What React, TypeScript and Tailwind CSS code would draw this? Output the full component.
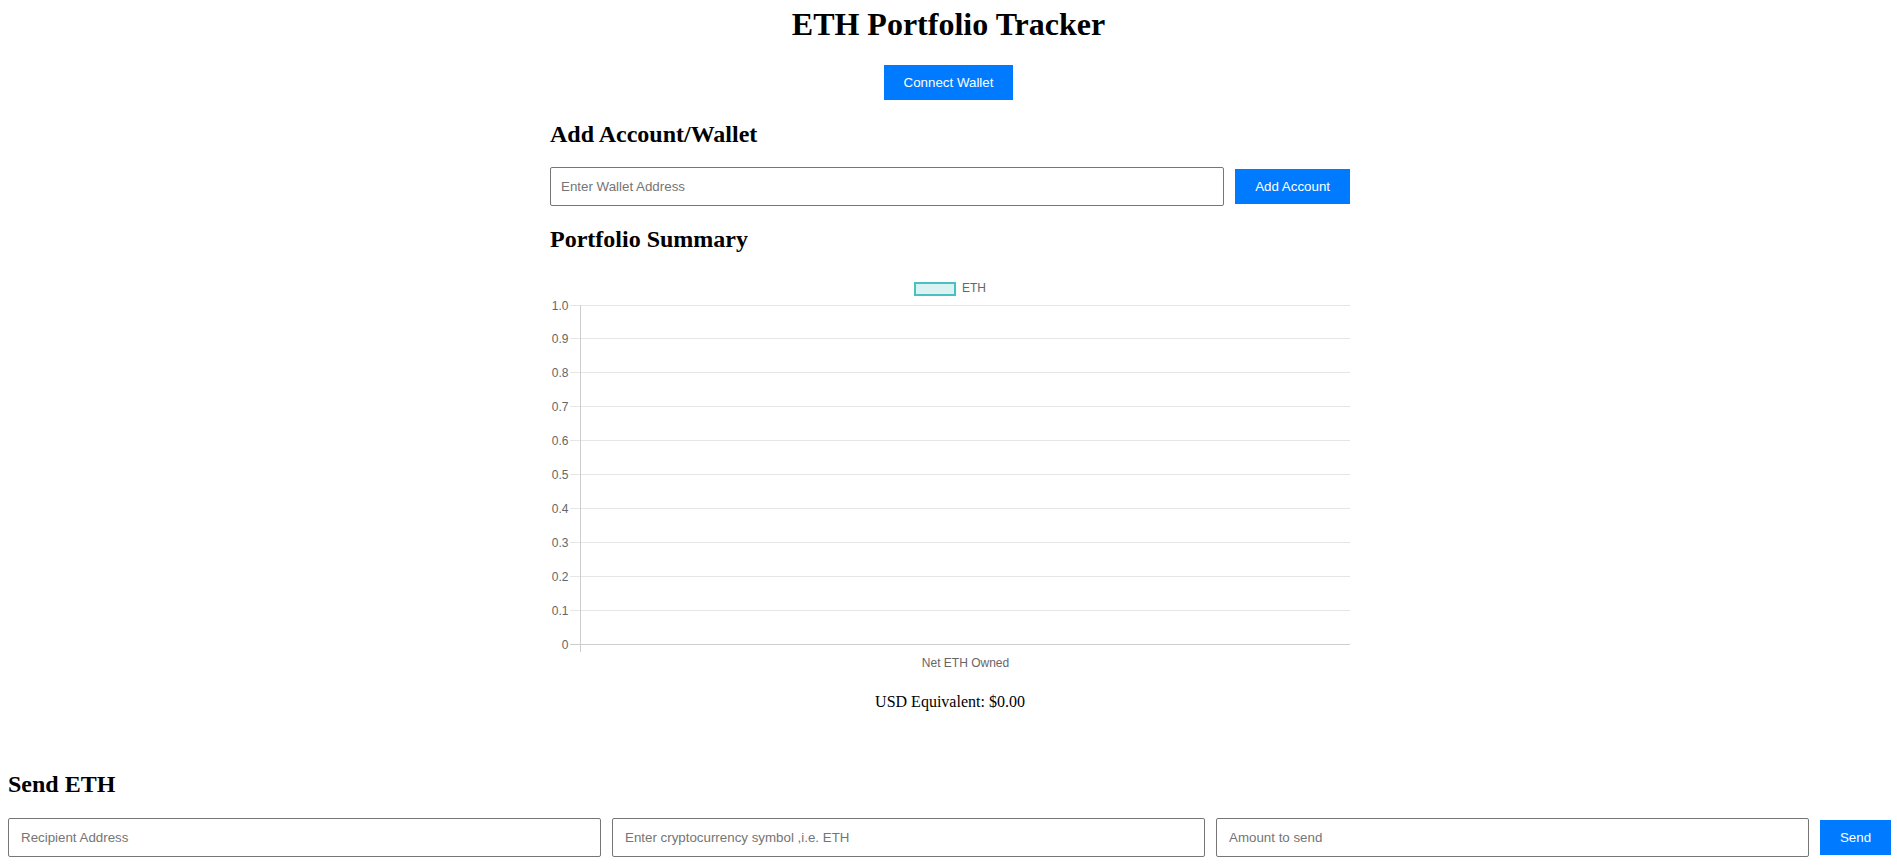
import React from "react"

const ticks = ["1.0", "0.9", "0.8", "0.7", "0.6", "0.5", "0.4", "0.3", "0.2", "0.1", "0"]

function PortfolioChart() {
  return (
    <svg width="800" height="400" className="block" fontFamily="'Liberation Sans', Arial, sans-serif" fontSize="12">
      {/* legend */}
      <rect x="365" y="11" width="40" height="12" fill="rgba(75,192,192,0.2)" stroke="rgb(75,192,192)" strokeWidth="2" />
      <text x="412" y="20.3" fill="#666">ETH</text>

      {ticks.map((t, i) => {
        const y = (i === 0 ? 33 : 32 + 34 * i) + 0.5
        return (
          <g key={t}>
            <line x1="20" x2="800" y1={y} y2={y} stroke={i === 10 ? "#cdcdcd" : "#e6e6e6"} />
            <text x="18.5" y={y + 4} textAnchor="end" fill="#666">
              {t}
            </text>
          </g>
        )
      })}
      <line x1="30.5" x2="30.5" y1="33" y2="380" stroke="#cdcdcd" />

      <text x="415.5" y="394.5" textAnchor="middle" fill="#666">
        Net ETH Owned
      </text>
    </svg>
  )
}

export default function App() {
  return (
    <div className="min-h-screen bg-white pt-[6px] text-black font-['Liberation_Serif','Times_New_Roman',serif]">
      <h1 className="text-center text-[32px] font-bold leading-[36px]">ETH Portfolio Tracker</h1>

      <div className="mt-[23px] flex justify-center">
        <button className="h-[35px] bg-[#007bff] px-[20px] text-[13.33px] text-white font-['Liberation_Sans',Arial,sans-serif]">
          Connect Wallet
        </button>
      </div>

      <div className="mx-auto w-[803px] pl-[3px]">
        {/* Add account */}
        <h2 className="mt-[20px] text-[24px] font-bold leading-[28px]">Add Account/Wallet</h2>
        <div className="mt-[19px] flex items-center gap-[11px]">
          <input
            placeholder="Enter Wallet Address"
            className="h-[39px] flex-1 rounded-[2px] border border-[#767676] px-[10px] text-[13.33px] outline-none placeholder:text-[#757575] font-['Liberation_Sans',Arial,sans-serif]"
          />
          <button className="h-[35px] bg-[#007bff] px-[20px] text-[13.33px] text-white font-['Liberation_Sans',Arial,sans-serif]">
            Add Account
          </button>
        </div>

        {/* Summary */}
        <h2 className="mt-[19px] text-[24px] font-bold leading-[28px]">Portfolio Summary</h2>
        <div className="mt-[19px]">
          <PortfolioChart />
        </div>
        <p className="mt-[21px] text-center text-[16px] leading-[18px]">USD Equivalent: $0.00</p>
      </div>

      {/* Send */}
      <div className="ml-2 mr-[6px]">
        <h2 className="mt-[59px] text-[24px] font-bold leading-[28px]">Send ETH</h2>
        <div className="mt-[20px] flex items-center gap-[11px]">
          <input
            placeholder="Recipient Address"
            className="h-[39px] min-w-0 flex-1 rounded-[2px] border border-[#767676] px-[12px] text-[13.33px] outline-none placeholder:text-[#757575] font-['Liberation_Sans',Arial,sans-serif]"
          />
          <input
            placeholder="Enter cryptocurrency symbol ,i.e. ETH"
            className="h-[39px] min-w-0 flex-1 rounded-[2px] border border-[#767676] px-[12px] text-[13.33px] outline-none placeholder:text-[#757575] font-['Liberation_Sans',Arial,sans-serif]"
          />
          <input
            placeholder="Amount to send"
            className="h-[39px] min-w-0 flex-1 rounded-[2px] border border-[#767676] px-[12px] text-[13.33px] outline-none placeholder:text-[#757575] font-['Liberation_Sans',Arial,sans-serif]"
          />
          <button className="h-[35px] w-[71px] bg-[#007bff] text-[13.33px] text-white font-['Liberation_Sans',Arial,sans-serif]">
            Send
          </button>
        </div>
      </div>
    </div>
  )
}
